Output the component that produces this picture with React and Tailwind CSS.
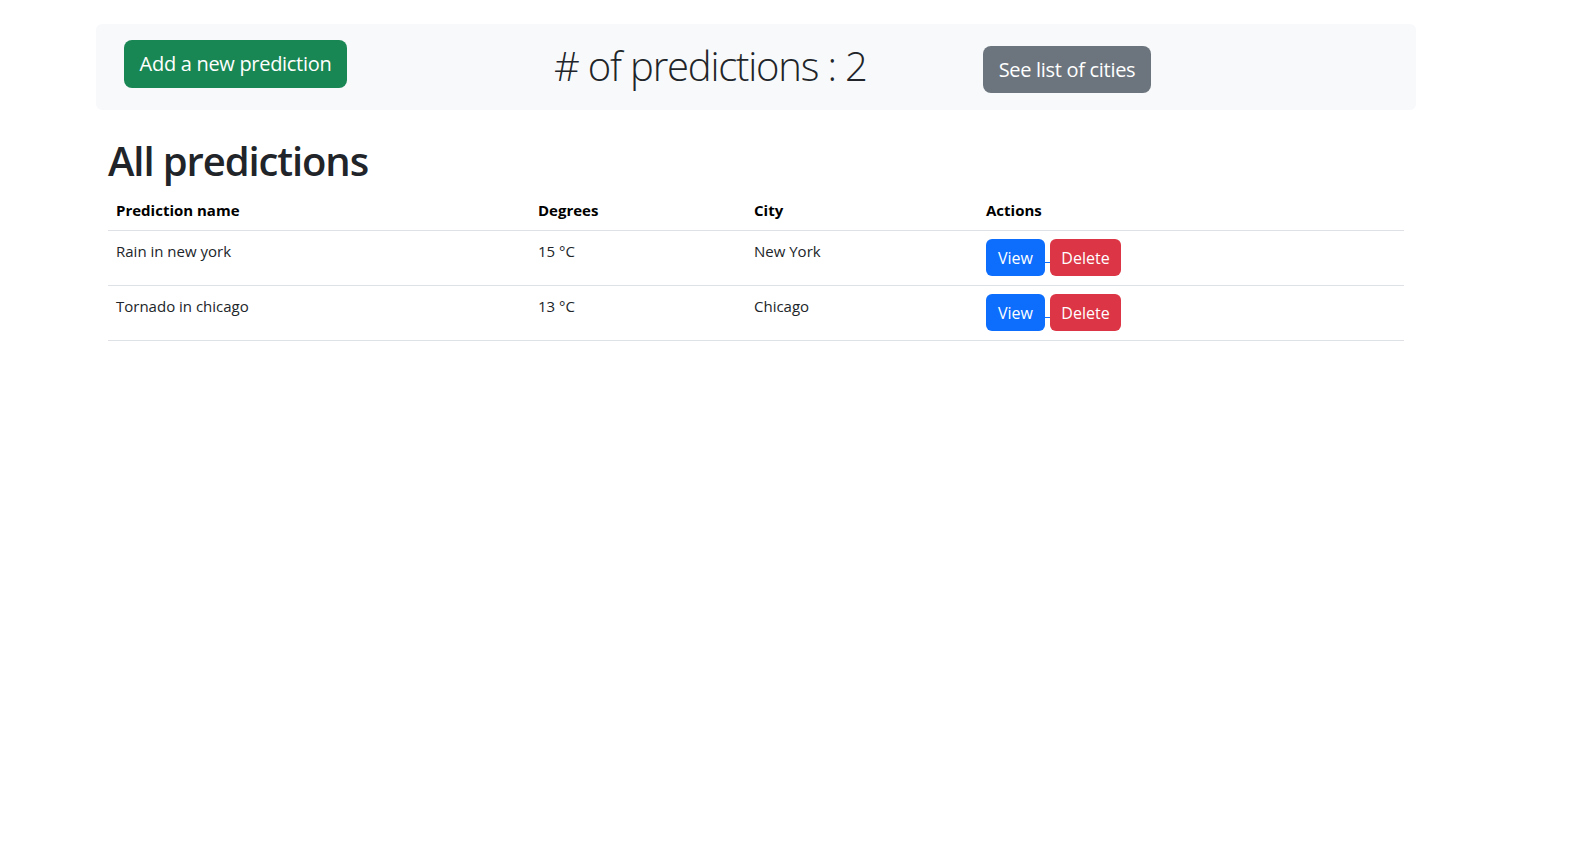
const predictions = [
  { id: 1, name: 'Rain in new york', degrees: 15, city: 'New York' },
  { id: 2, name: 'Tornado in chicago', degrees: 13, city: 'Chicago' },
];

const font = { fontFamily: '"Open Sans", "Noto Sans", sans-serif' };

export default function App() {
  return (
    <div className="min-h-screen bg-white pt-6 text-[#212529]" style={font}>
      <div className="ml-[96px] w-[1320px]">
        <nav className="flex h-[86px] items-start rounded-md bg-[#f8f9fa]">
          <a href="#" className="ml-[28px] mt-4 flex h-12 w-[223px] items-center justify-center rounded-lg bg-[#198754] text-[20px] tracking-[-0.3px] text-white">
            Add a new prediction
          </a>
          <h2 className="ml-[207px] mt-[18px] w-[420px] text-[40px] font-light leading-[48px] tracking-[-1.2px]">
            # of predictions : {predictions.length}
          </h2>
          <a href="#" className="mr-[265px] ml-auto mt-[22px] flex h-[47px] w-[168px] items-center justify-center rounded-lg bg-[#6c757d] text-[20px] tracking-[-0.3px] text-white">
            See list of cities
          </a>
        </nav>

        <div className="px-3">
          <h1 className="mt-[27px] mb-[5px] text-[40px] font-semibold leading-[48px] tracking-[-1.1px]">All predictions</h1>
          <div className="text-[15px]">
            <div className="grid grid-cols-[422px_216px_232px_1fr] border-b border-[#dee2e6] font-bold text-black">
              <div className="p-2 leading-6">Prediction name</div>
              <div className="p-2 leading-6">Degrees</div>
              <div className="p-2 leading-6">City</div>
              <div className="p-2 leading-6">Actions</div>
            </div>
            {predictions.map((p) => (
              <div key={p.id} className="grid grid-cols-[422px_216px_232px_1fr] border-b border-[#dee2e6]">
                <div className="p-2 leading-6">{p.name}</div>
                <div className="p-2 leading-6">{p.degrees} °C</div>
                <div className="p-2 leading-6">{p.city}</div>
                <div className="flex items-start px-2 pt-2 pb-[9px]">
                  <a href="#" className="flex h-[37px] w-[59px] items-center justify-center rounded-md bg-[#0d6efd] text-base text-white">View</a>
                  <span className="mt-[23px] h-px w-[5px] bg-[#0d6efd]" />
                  <a href="#" className="flex h-[37px] w-[71px] items-center justify-center rounded-md bg-[#dc3545] text-base text-white">Delete</a>
                </div>
              </div>
            ))}
          </div>
        </div>
      </div>
    </div>
  );
}
